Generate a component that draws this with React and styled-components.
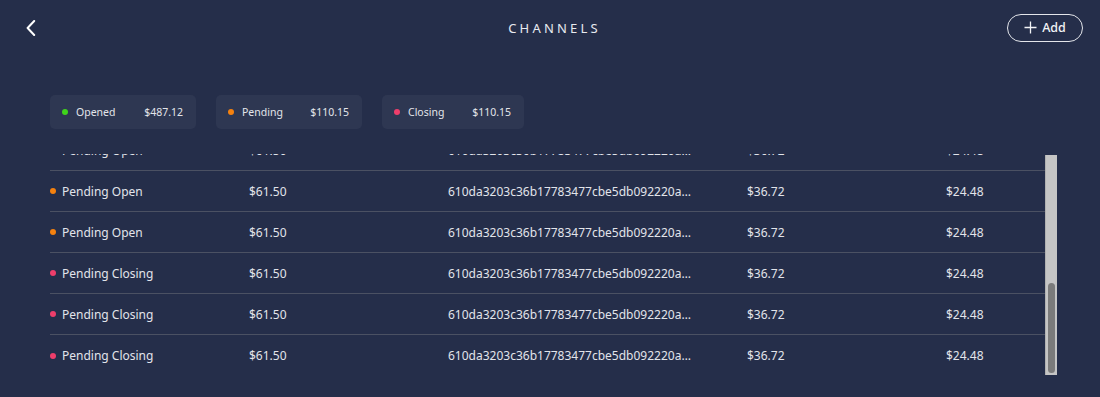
import React, { useEffect, useRef } from "react";
import styled, { createGlobalStyle } from "styled-components";

const Global = createGlobalStyle`
  html, body { margin: 0; padding: 0; background: #252e4a; }
  body { font-family: "Noto Sans", "Open Sans", sans-serif; color: #e4e6ec; }
  * { box-sizing: border-box; }
`;

const Page = styled.div`
  width: 1100px;
  height: 397px;
  background: #252e4a;
  overflow: hidden;
`;

const Header = styled.header`
  height: 56px;
  display: grid;
  grid-template-columns: 1fr auto 1fr;
  align-items: center;
  padding: 0 17px 0 26px;
`;

const BackButton = styled.button`
  justify-self: start;
  background: none;
  border: none;
  padding: 0;
  width: 14px;
  height: 18px;
  display: flex;
  align-items: center;
  cursor: pointer;
`;

const Title = styled.h1`
  margin: 0;
  font-size: 13px;
  font-weight: 400;
  letter-spacing: 3.2px;
  color: #e8eaf0;
`;

const AddButton = styled.button`
  justify-self: end;
  display: flex;
  align-items: center;
  gap: 5px;
  height: 28px;
  width: 76px;
  justify-content: center;
  border: 1px solid #e3e5ea;
  border-radius: 14px;
  background: transparent;
  color: #f2f3f6;
  font-family: "Noto Sans", sans-serif;
  font-size: 12.5px;
  font-weight: 500;
  padding: 0 0 1px 0;
  cursor: pointer;
`;

const Summary = styled.div`
  display: flex;
  gap: 20px;
  padding-left: 50px;
  margin-top: 39px;
`;

const Card = styled.div`
  width: ${(p) => p.$w}px;
  height: 34px;
  background: #2e3752;
  border-radius: 5px;
  display: flex;
  align-items: center;
  padding: 0 13px 0 12px;
  font-size: 10.5px;
  color: #e3e5ea;
`;

const Dot = styled.span`
  width: 6px;
  height: 6px;
  border-radius: 50%;
  background: ${(p) => p.$color};
  flex: none;
`;

const CardLabel = styled.span`
  margin-left: 8px;
  flex: 1;
`;

const ListArea = styled.div`
  display: flex;
  margin: 25px 0 0 50px;
  width: 1007px;
  height: 222px;
`;

const List = styled.div`
  flex: 1;
  height: 100%;
  overflow: hidden;
`;

const ScrollTrack = styled.div`
  width: 12px;
  margin-top: 1px;
  height: 220px;
  background: #c5c5c5;
  border-left: 1px solid #b0b0b0;
  display: flex;
  flex-direction: column;
  justify-content: flex-end;
  padding: 2px;
`;

const ScrollThumb = styled.div`
  height: ${(p) => p.$h}px;
  background: #7b7b7b;
  border-radius: 4px;
`;

const Row = styled.div`
  display: grid;
  grid-template-columns: 199px 199px 299px 199px 1fr;
  align-items: center;
  height: 41px;
  border-bottom: 1px solid #4b5163;
  font-size: 12px;
  color: #e2e4ea;
  &:last-child { border-bottom: none; }
`;

const NameCell = styled.div`
  display: flex;
  align-items: center;
  gap: 6px;
`;

const Hash = styled.div`
  max-width: 246px;
  white-space: nowrap;
  overflow: hidden;
  text-overflow: ellipsis;
`;

const COLORS = {
  green: "#3fd41b",
  orange: "#f5810f",
  pink: "#ee3e6b",
};

const rows = [
  ...Array(4).fill({ name: "Open", color: COLORS.green }),
  ...Array(5).fill({ name: "Pending Open", color: COLORS.orange }),
  ...Array(3).fill({ name: "Pending Closing", color: COLORS.pink }),
];

export default function App() {
  const ref = useRef(null);
  useEffect(() => {
    if (ref.current) ref.current.scrollTop = ref.current.scrollHeight;
  }, []);

  return (
    <Page>
      <Global />
      <Header>
        <BackButton aria-label="Back">
          <svg width="10" height="16" viewBox="0 0 10 16">
            <path d="M8.2 1 L1.6 8 L8.2 15" fill="none" stroke="#fff" strokeWidth="2" strokeLinecap="round" strokeLinejoin="round" />
          </svg>
        </BackButton>
        <Title>CHANNELS</Title>
        <AddButton>
          <svg width="13" height="13" viewBox="0 0 13 13">
            <path d="M6.5 0.5 V12.5 M0.5 6.5 H12.5" stroke="#f2f3f6" strokeWidth="1.3" />
          </svg>
          Add
        </AddButton>
      </Header>

      <Summary>
        <Card $w={146}>
          <Dot $color={COLORS.green} />
          <CardLabel>Opened</CardLabel>
          <span>$487.12</span>
        </Card>
        <Card $w={146}>
          <Dot $color={COLORS.orange} />
          <CardLabel>Pending</CardLabel>
          <span>$110.15</span>
        </Card>
        <Card $w={142}>
          <Dot $color={COLORS.pink} />
          <CardLabel>Closing</CardLabel>
          <span>$110.15</span>
        </Card>
      </Summary>

      <ListArea>
        <List ref={ref}>
          {rows.map((r, i) => (
            <Row key={i}>
              <NameCell>
                <Dot $color={r.color} />
                {r.name}
              </NameCell>
              <div>$61.50</div>
              <Hash>610da3203c36b17783477cbe5db092220a0b1d4e6f</Hash>
              <div>$36.72</div>
              <div>$24.48</div>
            </Row>
          ))}
        </List>
        <ScrollTrack>
          <ScrollThumb $h={90} />
        </ScrollTrack>
      </ListArea>
    </Page>
  );
}
